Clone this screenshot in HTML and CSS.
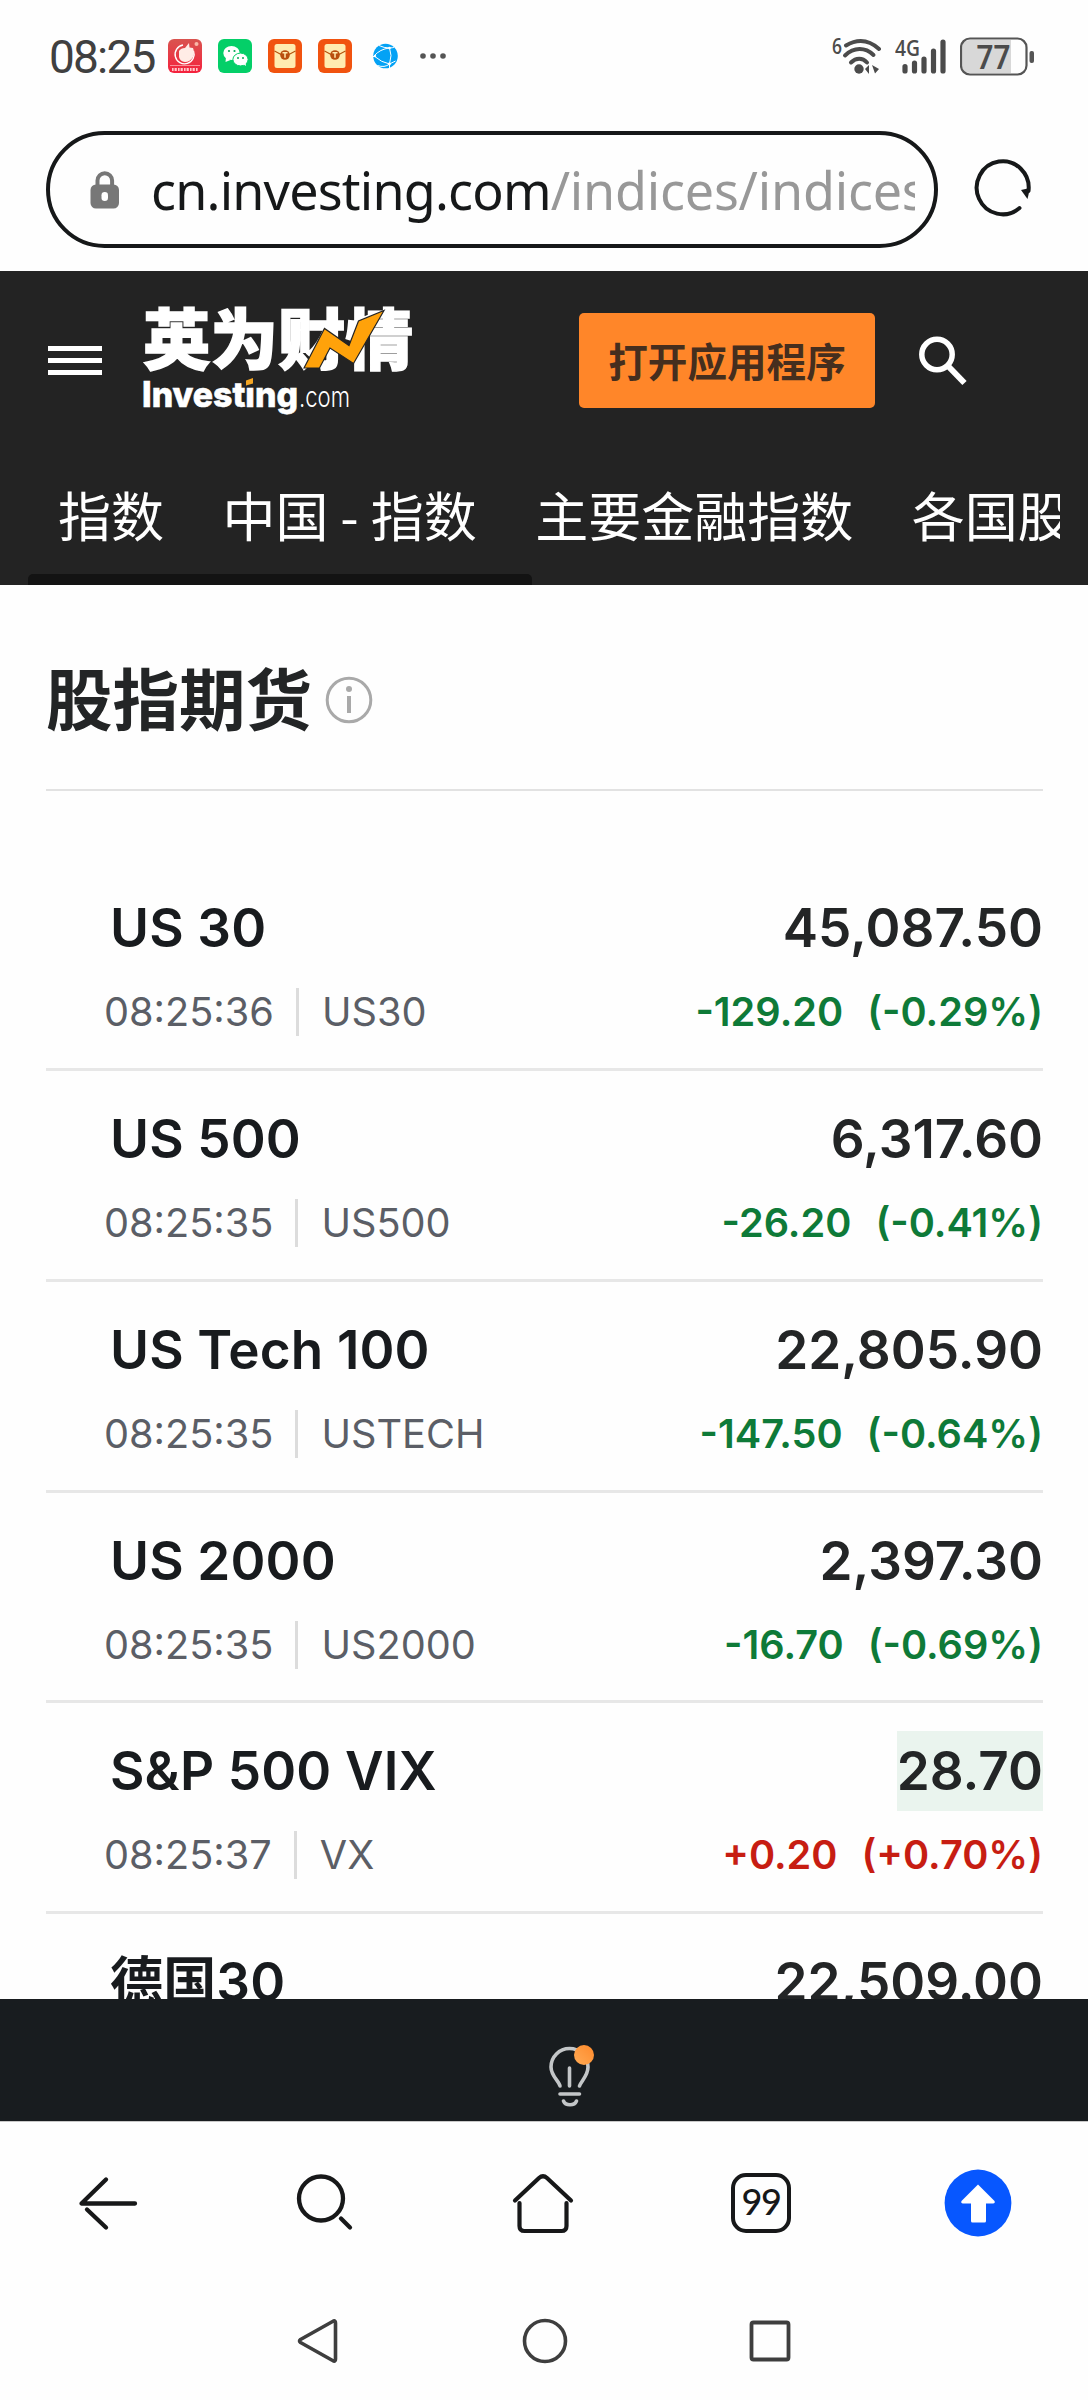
FILE: index.html
```html
<!DOCTYPE html>
<html lang="zh-CN">
<head>
<meta charset="utf-8">
<title>股指期货</title>
<link rel="stylesheet" href="styles.css">
</head>
<body>
<div class="status">
  <span class="clock">08:25</span>
  <div class="notifs">
    <svg width="34" height="34" viewBox="0 0 34 34"><defs><linearGradient id="red" x1="0" y1="0" x2="0" y2="1"><stop offset="0" stop-color="#d9544f"/><stop offset="1" stop-color="#f5213d"/></linearGradient></defs><rect width="34" height="34" rx="6" fill="url(#red)"/><path d="M15 6A9.500 9.500 0 1 0 25.500 12" fill="none" stroke="#fff" stroke-width="1.400"/><path d="M11 12q2-3 6-3l4-5 .5 4.500L25 9q2 5 0 9-3 5-8 5-5-.5-6-5z" fill="#ffece6"/><circle cx="28.500" cy="5" r="2" fill="#f9b8a8"/><path d="M2 26.500h30" stroke="#ffd5d5" stroke-width=".6"/><path d="M4 30.500h26" stroke="#ffc9cb" stroke-width="3" stroke-dasharray="1.600 1 2.200 1.200"/></svg>
    <svg width="34" height="34" viewBox="0 0 34 34"><rect width="34" height="34" rx="6" fill="#04cf68"/><ellipse cx="13.500" cy="14" rx="8.200" ry="7" fill="#fff"/><path d="M8 18l-.5 5 5-2z" fill="#fff"/><ellipse cx="22.500" cy="20.500" rx="7.600" ry="6.400" fill="#fff" stroke="#04cf68"/><path d="M25 25l3 2-.5-4z" fill="#fff"/><g fill="#04a956"><circle cx="11" cy="12" r="1.100"/><circle cx="16.500" cy="12" r="1.100"/><circle cx="20" cy="19" r="1"/><circle cx="25" cy="19" r="1"/></g></svg>
    <svg width="34" height="34" viewBox="0 0 34 34"><rect width="34" height="34" rx="6" fill="#f1530f"/><rect x="6.500" y="5" width="21" height="24" rx="2.500" fill="#ffecb0"/><path d="M6.500 12l7.500 4h6l7.500-4" fill="none" stroke="#b5530d" stroke-width="1.200"/><circle cx="17" cy="16" r="4.800" fill="#b9500f"/><path d="M14.500 13.800h5M17 13.800v5" stroke="#ffecb0" stroke-width="1.500"/></svg>
    <svg width="34" height="34" viewBox="0 0 34 34"><rect width="34" height="34" rx="6" fill="#f1530f"/><rect x="6.500" y="5" width="21" height="24" rx="2.500" fill="#ffecb0"/><path d="M6.500 12l7.500 4h6l7.500-4" fill="none" stroke="#b5530d" stroke-width="1.200"/><circle cx="17" cy="16" r="4.800" fill="#b9500f"/><path d="M14.500 13.800h5M17 13.800v5" stroke="#ffecb0" stroke-width="1.500"/></svg>
    <svg width="34" height="34" viewBox="0 0 34 34"><circle cx="17.500" cy="17" r="12.300" fill="#04a2f5"/><path d="M11 6.500q5 2.500 10.500 2.500 3 7 0 16-8-1.500-15.500-8Q12 10 21.500 9q3 0 5-1M6 17l-1 1M21.500 25l6-3M21.500 25q-5 4-12 1.500M21.500 25v4" fill="none" stroke="#fff" stroke-width="1"/><g fill="#fff"><circle cx="21.500" cy="9" r="1.300"/><circle cx="21.500" cy="25" r="1.400"/><circle cx="7" cy="17" r="1.200"/></g></svg>
    <svg width="30" height="34" viewBox="0 0 30 34" fill="#555"><circle cx="5" cy="17" r="2.800"/><circle cx="15" cy="17" r="2.800"/><circle cx="25" cy="17" r="2.800"/></svg>
  </div>
  <div class="signals">
    <svg width="50" height="38" viewBox="0 0 50 38"><text x="0" y="17" class="tiny" textLength="10" lengthAdjust="spacingAndGlyphs">6</text><g fill="none" stroke="#4b4b4b" stroke-width="4" stroke-linecap="round"><path d="M14 8.500c11-6.500 22-6.500 33 3.500"/><path d="M13 18.500c9-8.500 20-8.500 28.500-.5"/><path d="M19 25.500c5-5 11.500-5 16 0"/></g><circle cx="27" cy="32" r="4.700" fill="#4b4b4b"/><path d="M33 32l4-4v9M38 28v9M47 32l-7-4 3 8.500z" fill="#4b4b4b"/></svg>
    <svg width="52" height="38" viewBox="0 0 52 38"><text x="0" y="18.500" class="tiny" textLength="25" lengthAdjust="spacingAndGlyphs">4G</text><path d="M10 29.500v4.500M19.500 26v8M29 22v12M38.500 14v20M48 5v29" stroke="#4b4b4b" stroke-width="5.200" stroke-linecap="round"/></svg>
    <svg width="75" height="40" viewBox="0 0 75 40"><path d="M10 3h41v33H10q-8 0-8-8V11q0-8 8-8z" fill="#d8d8d8"/><rect x="1" y="1.500" width="65.500" height="36" rx="9" fill="none" stroke="#555" stroke-width="2.200"/><rect x="69.500" y="14" width="4.500" height="12" rx="2" fill="#555"/><text x="16.500" y="31.500" class="pct" textLength="34" lengthAdjust="spacingAndGlyphs">77</text></svg>
  </div>
</div>
<div class="urlrow">
  <div class="urlbar">
    <svg class="lock" width="30" height="38" viewBox="0 0 30 38"><path d="M7.500 16V9.500a7.300 7.300 0 0 1 14.600 0V16" fill="none" stroke="#777" stroke-width="4"/><rect x=".5" y="13.500" width="28.500" height="24" rx="5.500" fill="#777"/><rect x="11.500" y="21" width="6.500" height="9" rx="3.200" fill="#fff"/></svg>
    <div class="url">cn.investing.com<span>/indices/indices-futures</span></div>
  </div>
  <svg class="reload" width="62" height="62" viewBox="0 0 62 62"><path d="M49.500 50a26 26.500 0 1 1 9-17" fill="none" stroke="#161819" stroke-width="4" stroke-linecap="round"/><path d="M51 32l9-2-2.500 11z" fill="#161819"/></svg>
</div>
<header class="site">
  <div class="topbar">
    <div class="burger"><i></i><i></i><i></i></div>
    <svg class="logo" width="270" height="112" viewBox="0 0 270 112">
      <text class="logo-cn" x="-1" y="58.500" textLength="270" lengthAdjust="spacingAndGlyphs">英为财情</text>
      <path d="M160 63l20.500-39.500L205 40.500l9.500-24.500L240 5.500 209.500 58.500 186 43l-10.500 20z" fill="#ffa20a" stroke="#232323" stroke-width="1.200"/>
      <text class="logo-en" x="-2" y="102" textLength="156" lengthAdjust="spacingAndGlyphs">Invest&#305;ng</text>
      <path d="M102 75.500l7-2.500v5.500l-7 2z" fill="#f5a623"/>
      <text class="logo-com" x="155" y="102" textLength="51" lengthAdjust="spacingAndGlyphs">.com</text>
    </svg>
    <a class="open">打开应用程序</a>
    <svg class="find" width="50" height="50" viewBox="0 0 50 50" fill="none" stroke="#fff"><circle cx="19" cy="18.500" r="15.200" stroke-width="5.500"/><path d="M30 30l16.500 17" stroke-width="6"/></svg>
  </div>
  <nav class="tabs"><a>指数</a><a>中国 - 指数</a><a>主要金融指数</a><a>各国股指</a></nav>
  <div class="scroll"></div>
</header>
<main>
  <div class="heading"><h1>股指期货</h1><svg width="48" height="48" viewBox="0 0 48 48"><circle cx="24" cy="24" r="21.800" fill="none" stroke="#a9a9a9" stroke-width="3"/><circle cx="24" cy="13" r="3" fill="#a9a9a9"/><path d="M24 20v17" stroke="#a9a9a9" stroke-width="4"/></svg></div>
  <section class="quotes">
    <div class="row"><div class="line"><b>US 30</b><strong>45,087.50</strong></div><div class="sub"><time>08:25:36</time><span class="sym">US30</span><span class="chg down"><i>-129.20</i><i>(-0.29%)</i></span></div></div>
    <div class="row"><div class="line"><b>US 500</b><strong>6,317.60</strong></div><div class="sub"><time>08:25:35</time><span class="sym">US500</span><span class="chg down"><i>-26.20</i><i>(-0.41%)</i></span></div></div>
    <div class="row"><div class="line"><b>US Tech 100</b><strong>22,805.90</strong></div><div class="sub"><time>08:25:35</time><span class="sym">USTECH</span><span class="chg down"><i>-147.50</i><i>(-0.64%)</i></span></div></div>
    <div class="row"><div class="line"><b>US 2000</b><strong>2,397.30</strong></div><div class="sub"><time>08:25:35</time><span class="sym">US2000</span><span class="chg down"><i>-16.70</i><i>(-0.69%)</i></span></div></div>
    <div class="row"><div class="line"><b>S&amp;P 500 VIX</b><strong class="flash">28.70</strong></div><div class="sub"><time>08:25:37</time><span class="sym">VX</span><span class="chg up"><i>+0.20</i><i>(+0.70%)</i></span></div></div>
    <div class="row"><div class="line"><b>德国30</b><strong>22,509.00</strong></div></div>
  </section>
</main>
<div class="tip">
  <svg width="46" height="66" viewBox="0 0 46 66"><defs><linearGradient id="dot" x1="1" y1="0" x2="0" y2="1"><stop offset="0" stop-color="#ff8a2b"/><stop offset="1" stop-color="#ffab55"/></linearGradient></defs><g fill="none" stroke="#c3c6c8" stroke-width="3.600" stroke-linecap="round"><path d="M12 43C11 38 3 33 3 24a18.500 18.500 0 0 1 37 0c0 9-7 14-8.500 19"/><path d="M21.500 25v18M12 51h19.500M15.500 58c2 5 11 5 13 0"/></g><circle cx="36" cy="12" r="10" fill="url(#dot)"/></svg>
</div>
<div class="tools">
  <svg width="60" height="60" viewBox="0 0 60 60" fill="none" stroke="#171819" stroke-width="4.300" stroke-linecap="round" stroke-linejoin="round"><path d="M57 30.500H3.500L28 6.500M9 36.500l19 18"/></svg>
  <svg width="60" height="60" viewBox="0 0 60 60" fill="none" stroke="#171819" stroke-width="4.300" stroke-linecap="round"><circle cx="26" cy="25.500" r="22"/><path d="M46 45.500l9 9"/></svg>
  <svg width="64" height="64" viewBox="0 0 64 64" fill="none" stroke="#171819" stroke-width="4.200" stroke-linecap="round" stroke-linejoin="round"><path d="M4 29.500L28 7q4-3.500 8 0l24 22.500M8.500 32v23q0 5 5 5h37q5 0 5-5V32"/></svg>
  <div class="count">99</div>
  <svg width="68" height="68" viewBox="0 0 68 68"><circle cx="34" cy="34" r="33.400" fill="#0757ff"/><path d="M34 15.500L50.500 32q1 2-1.500 2.500h-7V52q0 1.500-1.500 1.500h-12Q27 53.500 27 52V34.500h-8q-2.500-.5-1.500-2.500z" fill="#fff"/></svg>
</div>
<div class="system">
  <svg width="46" height="46" viewBox="0 0 46 46" fill="none" stroke="#3e3e3e" stroke-width="3.600" stroke-linejoin="round"><path d="M4.500 21.500L37.500 3q2-.5 2 2v36q0 2.500-2 2L4.500 24.500q-2-1.500 0-3z"/></svg>
  <svg width="46" height="46" viewBox="0 0 46 46"><circle cx="23" cy="23" r="20.500" fill="none" stroke="#3e3e3e" stroke-width="3.600"/></svg>
  <svg width="46" height="46" viewBox="0 0 46 46"><rect x="4.500" y="4.500" width="37" height="37" rx="2" fill="none" stroke="#3e3e3e" stroke-width="3.800"/></svg>
</div>
</body>
</html>
```

FILE: styles.css
```css
* { box-sizing: border-box; }
body { margin: 0; width: 1088px; height: 2400px; overflow: hidden; display: flex; flex-direction: column; background: #fefefe; font-family: Inter, "Noto Sans CJK SC", sans-serif; color: #181b1e; }
svg { display: block; flex: none; }
i { font-style: normal; }

.status { height: 131px; padding: 37px 53px 0 49px; display: flex; align-items: flex-start; }
.clock { width: 119px; height: 38px; font: 400 46px/41px "Roboto", sans-serif; letter-spacing: -1.8px; color: #404040; }
.notifs { display: flex; gap: 16px; padding-top: 2px; }
.signals { display: flex; margin-left: auto; }
.signals svg + svg { margin-left: 13px; }
.tiny { font: 600 21px "Open Sans", sans-serif; fill: #4b4b4b; }
.pct { font: 600 34px Roboto, sans-serif; fill: #4b4b4b; }

.urlrow { height: 140px; display: flex; }
.urlbar { margin-left: 46px; width: 892px; height: 117px; border: 4px solid #161819; border-radius: 59px; padding-left: 40px; display: flex; }
.lock { margin-top: 36px; }
.url { margin-left: 31px; margin-top: 15px; width: 764px; height: 80px; overflow: hidden; white-space: nowrap; font: 400 52px/80px "Noto Sans", sans-serif; letter-spacing: -0.8px; color: #161819; }
.url span { color: #989898; letter-spacing: -0.2px; }
.reload { margin: 27px 0 0 32px; }

.site { height: 314px; background: #232323; flex: none; }
.topbar { height: 202px; display: flex; }
.burger { width: 54px; margin: 75px 0 0 48px; display: flex; flex-direction: column; gap: 7px; height: 29px; }
.burger i { height: 5px; background: #fff; }
.logo { margin: 34px 0 0 42px; overflow: visible; }
.logo-cn { font: 900 66px "Noto Sans CJK SC", sans-serif; fill: #fff; stroke: #fff; stroke-width: 1.5px; }
.logo-en { font: 800 35px Inter, sans-serif; fill: #fff; stroke: #fff; stroke-width: .6px; }
.logo-com { font: 300 29px Inter, sans-serif; fill: #fff; }
.open { margin: 42px 0 0 165px; width: 296px; height: 95px; border-radius: 5px; background: #ff8629; color: #452e1e; font: 700 39.600px/94px "Noto Sans CJK SC", sans-serif; text-align: center; }
.find { margin: 65px 0 0 43px; }
.tabs { height: 101px; margin: 0 28px 0 58px; display: flex; gap: 58.500px; overflow: hidden; white-space: nowrap; color: #fff; font: 400 53px/82px "Noto Sans CJK SC", sans-serif; }
.scroll { margin-left: 28px; width: 504px; height: 11px; border-radius: 5px 5px 0 0; background: #131313; }

main { height: 1414px; flex: none; overflow: hidden; padding: 0 45px 0 46px; }
.heading { height: 206px; border-bottom: 2px solid #e2e2e2; display: flex; align-items: center; gap: 13px; padding: 26px 0 0 0; }
h1 { margin: 0; padding-bottom: 9px; font: 600 66.500px/100px "Noto Sans CJK SC", sans-serif; color: #232526; }
.quotes { padding-top: 69.300px; }
.row { height: 210.750px; border-bottom: 3px solid #e7e7e7; padding-top: 28px; }
.line { display: flex; justify-content: space-between; height: 80px; font-size: 53px; line-height: 81px; font-weight: 600; padding-left: 64px; }
.line b { font-weight: 600; letter-spacing: .15px; }
.line strong { font-weight: 600; color: #232526; }
.line .flash { background: #eaf4ee; }
.sub { display: flex; align-items: center; height: 88px; padding-left: 58px; font-size: 39.700px; color: #5b5e66; }
.sym { line-height: 48px; margin-left: 22px; padding-left: 23px; border-left: 3px solid #dcdcdc; }
.chg { margin-left: auto; display: flex; gap: 24px; font-weight: 600; }
.down { color: #0e7a38; }
.up { color: #c71d12; }

.tip { height: 122px; flex: none; background: #181c1f; padding: 44px 0 0 548px; }
.tools { height: 160px; border-top: 1px solid #c8c8c8; display: flex; align-items: center; padding: 2px 0 0 78px; flex: none; }
.tools > :nth-child(2) { margin-left: 157px; }
.tools > :nth-child(3) { margin-left: 156px; }
.tools > :nth-child(4) { margin-left: 156px; }
.tools > :nth-child(5) { margin-left: 153px; }
.count { width: 60px; height: 60px; border: 4px solid #171819; border-radius: 15px; text-align: center; font: 500 36px/48px Lato, sans-serif; letter-spacing: -1.5px; color: #171819; }
.system { flex: none; height: 119px; display: flex; justify-content: space-between; padding: 37px 295px 0 296px; }
```
